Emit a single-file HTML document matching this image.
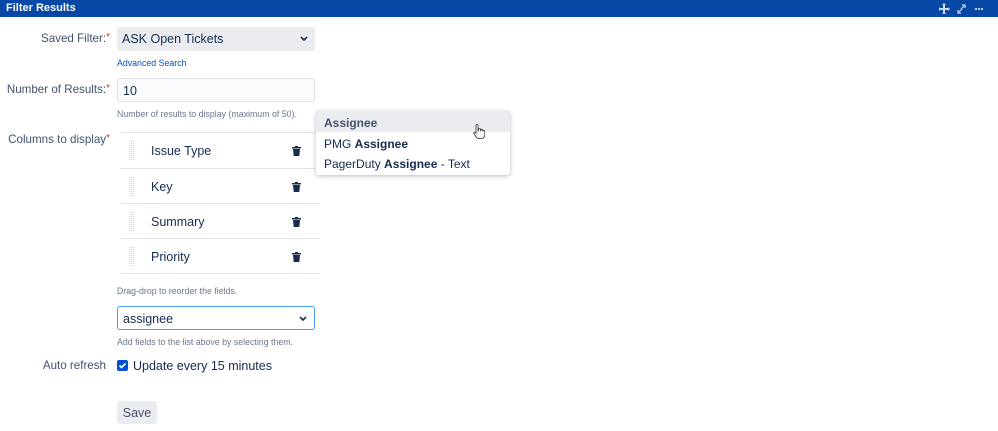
<!DOCTYPE html>
<html><head><style>
*{box-sizing:border-box;margin:0;padding:0}
body{width:998px;height:431px;background:#fff;font-family:"Liberation Sans",sans-serif;color:#172b4d;position:relative;overflow:hidden}
.hdr{position:absolute;left:0;top:0;width:998px;height:17px;background:#0747a6;color:#fff;font-size:11px;font-weight:bold;padding:2px 6px}
.lbl{position:absolute;font-size:11.6px;color:#42526e;text-align:right;white-space:nowrap}
.req{color:#de350b;font-size:10px;vertical-align:top}
.sel{position:absolute;left:117px;width:198px;height:24px;border-radius:3px;font-size:12.5px;padding:5px 5px}
.chev{position:absolute;right:6px;top:6px}
.small{position:absolute;font-size:8.8px;color:#6b778c;white-space:nowrap}
.row{position:absolute;left:121px;width:199px;height:35px;border-top:1px solid #dfe1e6;font-size:12.5px}
.row span{position:absolute;left:30px;top:11px;color:#172b4d}
.grip{position:absolute;left:8px;top:7px;width:6px;height:20px;background:repeating-linear-gradient(90deg,#c8ccd3 0 1px,transparent 1px 2px),#fff;opacity:.9}
.grip:after{content:"";position:absolute;inset:0;background:repeating-linear-gradient(0deg,transparent 0 1px,#fff 1px 2px)}
.trash{position:absolute;left:171px;top:13px}
</style></head><body>
<div class="hdr">Filter Results</div>
<svg style="position:absolute;left:939px;top:3px" width="56" height="11" viewBox="0 0 56 11" fill="#fff"><path d="M5 0l2 2H6v3h3V4l2 2-2 2V7H6v3h1l-2 2-2-2h1V7H1v1L-1 6 1 4v1h3V2H3z" opacity=".8"/><path d="M19 10l4-4M23 2h3v3M19 7v3h3M26 2l-4 4" stroke="#fff" stroke-width="1.2" fill="none" opacity=".8"/><circle cx="37" cy="6" r="1"/><circle cx="40" cy="6" r="1"/><circle cx="43" cy="6" r="1"/></svg>

<div class="lbl" style="right:888px;top:32px">Saved Filter:<span class="req">*</span></div>
<div class="sel" style="top:27px;background:#ebecf0">ASK Open Tickets<svg class="chev" width="10" height="10" viewBox="0 0 10 10"><path d="M2 4l3 3 3-3" stroke="#172b4d" stroke-width="1.6" fill="none"/></svg></div>
<div class="small" style="left:117px;top:58px;color:#0052cc">Advanced Search</div>

<div class="lbl" style="right:888px;top:83px">Number of Results:<span class="req">*</span></div>
<div class="sel" style="top:78px;background:#fafbfc;border:1px solid #dfe1e6">10</div>
<div class="small" style="left:117px;top:109px">Number of results to display (maximum of 50).</div>

<div class="lbl" style="right:888px;top:133px">Columns to display<span class="req">*</span></div>
<div class="row" style="top:132px"><div class="grip"></div><span>Issue Type</span><svg class="trash" width="9" height="10" viewBox="0 0 9 10" fill="#172b4d"><path d="M3 0h3v1h3v1.5H0V1h3zM1 3h7l-.7 7H1.7z"/></svg></div>
<div class="row" style="top:168px"><div class="grip"></div><span>Key</span><svg class="trash" width="9" height="10" viewBox="0 0 9 10" fill="#172b4d"><path d="M3 0h3v1h3v1.5H0V1h3zM1 3h7l-.7 7H1.7z"/></svg></div>
<div class="row" style="top:203px"><div class="grip"></div><span>Summary</span><svg class="trash" width="9" height="10" viewBox="0 0 9 10" fill="#172b4d"><path d="M3 0h3v1h3v1.5H0V1h3zM1 3h7l-.7 7H1.7z"/></svg></div>
<div class="row" style="top:238px;border-bottom:1px solid #dfe1e6;height:36px"><div class="grip"></div><span>Priority</span><svg class="trash" width="9" height="10" viewBox="0 0 9 10" fill="#172b4d"><path d="M3 0h3v1h3v1.5H0V1h3zM1 3h7l-.7 7H1.7z"/></svg></div>

<div class="small" style="left:117px;top:286px">Drag-drop to reorder the fields.</div>
<div class="sel" style="top:306px;background:#fff;border:1.5px solid #4c9aff">assignee<svg class="chev" width="10" height="10" viewBox="0 0 10 10"><path d="M2 4l3 3 3-3" stroke="#172b4d" stroke-width="1.6" fill="none"/></svg></div>
<div class="small" style="left:117px;top:337px">Add fields to the list above by selecting them.</div>

<div class="lbl" style="right:892px;top:359px">Auto refresh</div>
<div style="position:absolute;left:117px;top:360px;width:11px;height:11px;background:#0052cc;border-radius:2px"><svg width="11" height="11" viewBox="0 0 11 11" style="display:block"><path d="M2.5 5.5l2 2 4-4" stroke="#fff" stroke-width="1.6" fill="none"/></svg></div>
<div style="position:absolute;left:133px;top:359px;font-size:12.5px;color:#172b4d">Update every 15 minutes</div>

<div style="position:absolute;left:117px;top:401px;width:40px;height:23px;background:#ebecf0;border-radius:3px;font-size:12.5px;text-align:center;padding-top:5px;color:#42526e">Save</div>

<div style="position:absolute;left:316px;top:111px;width:194px;height:64px;background:#fff;border-radius:3px;box-shadow:0 1px 4px rgba(9,30,66,.3);font-size:12px">
<div style="height:21px;background:#ebecf0;padding:5px 8px;font-weight:bold;color:#42526e">Assignee</div>
<div style="padding:5px 8px 0">PMG <b>Assignee</b></div>
<div style="padding:6px 8px 0">PagerDuty <b>Assignee</b> - Text</div>
</div>
<svg style="position:absolute;left:473px;top:124px" width="12" height="15" viewBox="0 0 12 15"><path d="M3 1.5a1 1 0 012 0V7h.5V5.5a1 1 0 012 0V7h.3V6.3a1 1 0 012 0V7.5a1 1 0 012 0V11c0 2-1.5 3.5-3.5 3.5H6c-1.5 0-2.5-1-3.3-2L.8 9.5a1 1 0 011.7-1L3 9.3z" fill="#fff" stroke="#333" stroke-width=".8"/></svg>
</body></html>
